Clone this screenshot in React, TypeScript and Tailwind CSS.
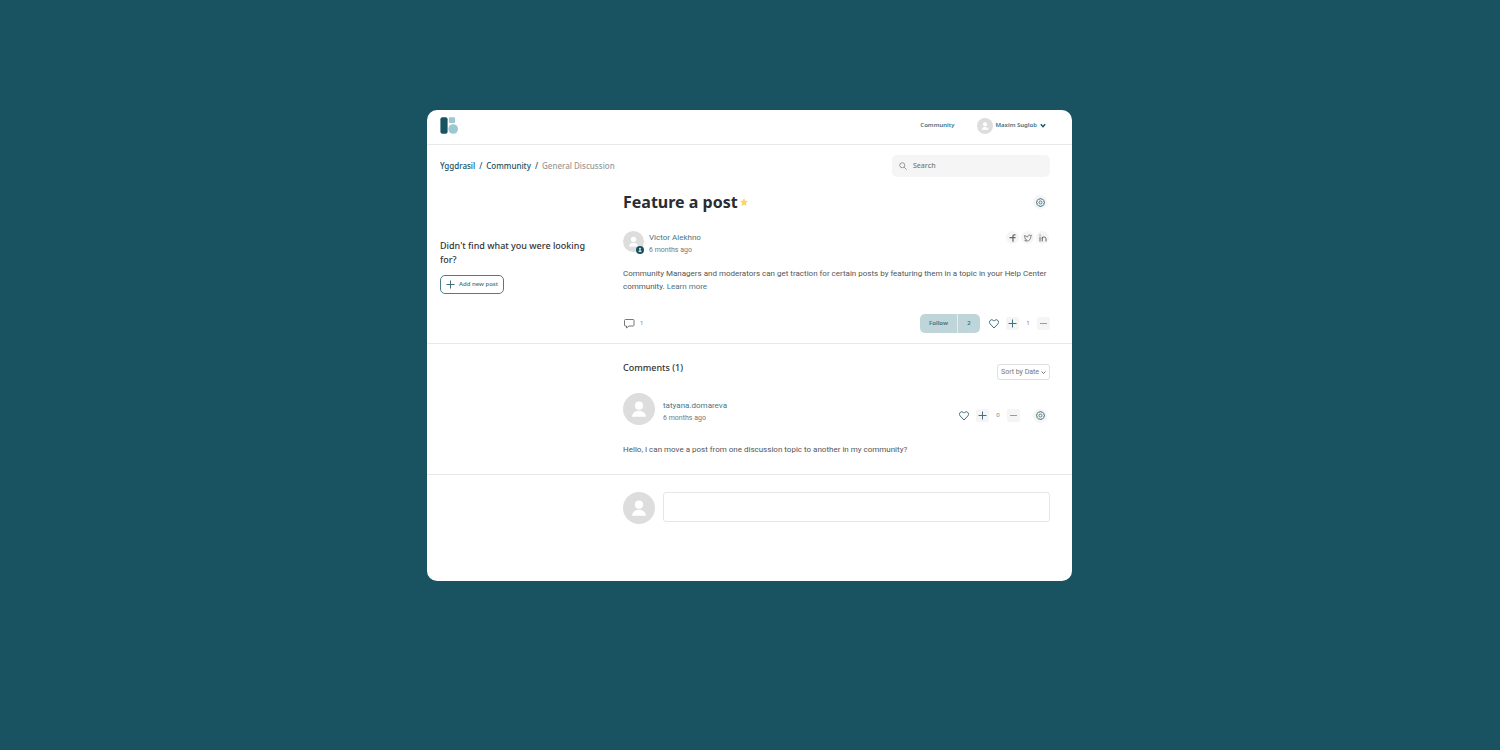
import { useState } from "react";

const HeartIcon = () => (
  <svg viewBox="0 0 20 20" className="w-[10px] h-[10px]" fill="none" stroke="currentColor" strokeWidth="2">
    <path d="M10 18 2.300 9.900A4.600 4.600 0 0 1 2.300 3 4.500 4.500 0 0 1 8.900 3L10 4.200l1.100-1.200a4.500 4.500 0 0 1 6.600 0 4.600 4.600 0 0 1 0 6.900Z" />
  </svg>
);

const PlusIcon = () => (
  <svg viewBox="0 0 9 9" className="w-[9px] h-[9px]" fill="none" stroke="currentColor">
    <path d="M4.500 0.500v8M0.500 4.500h8" />
  </svg>
);

const MinusIcon = () => (
  <svg viewBox="0 0 9 9" className="w-[9px] h-[9px]" fill="none" stroke="currentColor">
    <path d="M1 4.500h7" />
  </svg>
);

const GearIcon = () => (
  <svg viewBox="0 0 24 24" className="w-[9px] h-[9px]" fill="none" stroke="currentColor" strokeWidth="2.200" strokeLinejoin="round">
    <path d="M9.600 1.600h4.800l.8 2.800 2.600-1.400 3.300 3.300-1.400 2.600 2.800.8v4.800l-2.800.8 1.400 2.600-3.300 3.300-2.600-1.400-.8 2.800H9.600l-.8-2.800-2.600 1.400-3.300-3.300 1.400-2.600-2.800-.8V9.600l2.800-.8-1.400-2.600 3.300-3.300 2.600 1.400Z" />
    <circle cx="12" cy="12" r="4" />
  </svg>
);

const Avatar = ({ className }: { className: string }) => (
  <svg viewBox="0 0 32 32" className={`shrink-0 ${className}`}>
    <circle cx="16" cy="16" r="16" fill="#dddddd" />
    <circle cx="16" cy="12.700" r="4.100" fill="#fff" />
    <path d="M9 23.700c.4-3.700 3.200-5.900 7-5.900s6.600 2.200 7 5.900Z" fill="#fff" />
  </svg>
);

const GearButton = () => (
  <button
    aria-label="Settings"
    className="flex items-center justify-center w-[14px] h-[14px] mr-[3px] rounded-full bg-[#f5f5f5] text-[#3f707c] cursor-pointer"
  >
    <GearIcon />
  </button>
);

const Votes = ({ initial }: { initial: number }) => {
  const [votes, setVotes] = useState(initial);
  return (
    <div className="flex items-center text-[#3f707c]">
      <button aria-label="Like" className="mr-[7px] cursor-pointer">
        <HeartIcon />
      </button>
      <button
        aria-label="Vote up"
        className="flex items-center justify-center w-[13px] h-[13px] rounded-[2px] bg-[#f5f5f5] cursor-pointer"
        onClick={() => setVotes(votes + 1)}
      >
        <PlusIcon />
      </button>
      <span className="w-[18px] text-center text-[6px] text-[#777777]">{votes}</span>
      <button
        aria-label="Vote down"
        className="flex items-center justify-center w-[13px] h-[13px] rounded-[2px] bg-[#f5f5f5] text-[#86a3aa] cursor-pointer"
        onClick={() => setVotes(votes - 1)}
      >
        <MinusIcon />
      </button>
    </div>
  );
};

const socials = [
  {
    name: "Facebook",
    icon: (
      <svg viewBox="0 0 16 16" className="w-[8px] h-[8px]" fill="none" stroke="currentColor" strokeWidth="2.500">
        <path d="M13 1.800h-2.500C8.700 1.800 7.900 2.800 7.900 4.600V15.500M1 7h12" />
      </svg>
    ),
  },
  {
    name: "Twitter",
    icon: (
      <svg viewBox="0 0 16 16" className="w-[8px] h-[8px]" fill="none" stroke="currentColor" strokeWidth="1.600" strokeLinejoin="round">
        <path d="M1.500 2.500C3 4.600 5.200 5.600 7.800 5.600 7.500 3.400 9 2 10.700 2c1 0 1.700.4 2.200 1l2-.5-1.200 2.200c.2 5-3 9.300-7.700 9.300-1.800 0-3.400-.4-4.500-1.200 1.500 0 2.800-.4 3.700-1.100C2 10.500.8 6.500 1.500 2.500Z" />
      </svg>
    ),
  },
  {
    name: "LinkedIn",
    icon: (
      <svg viewBox="0 0 16 16" className="w-[8px] h-[8px]" fill="none" stroke="currentColor" strokeWidth="2">
        <path d="M2 5.500V15M2 1v2.200M6.500 15V5.500M6.500 9.500c0-2.200 1.400-3.500 3.600-3.500S14 7.300 14 9.500V15" />
      </svg>
    ),
  },
];

export default function App() {
  const [comment, setComment] = useState("");
  return (
    <div className="min-h-screen bg-[#195261] pl-4 pr-[17px] pt-[110px] pb-10 font-['Noto_Sans',sans-serif] text-[#333333]">
      <div className="w-full max-w-[645px] mx-auto rounded-[10px] bg-white pb-[57px]">
        <header className="flex items-center justify-between h-[35px] pl-[13px] pr-[26px] pb-[3px] border-b border-[#e6e8e9]">
          <a href="#" aria-label="Home">
            <svg viewBox="0 0 18 17" className="w-[18px] h-[17px]">
              <rect x="0.400" y="0.200" width="7.200" height="16.600" rx="2" fill="#195261" />
              <rect x="8.900" y="0.300" width="6.100" height="5.600" rx="1" fill="#9bc8d1" />
              <circle cx="13.200" cy="12" r="4.800" fill="#9bc8d1" />
            </svg>
          </a>
          <nav className="flex items-center gap-[23px] text-[6px] font-semibold text-[#3f707c]">
            <a href="#">Community</a>
            <button className="flex items-center cursor-pointer">
              <Avatar className="w-[16px] h-[16px] mr-[2px]" />
              Maxim Suglob
              <svg viewBox="0 0 6 6" className="w-[6px] h-[6px] ml-[3px] text-[#195261]" fill="none" stroke="currentColor" strokeWidth="1.400">
                <path d="M0.800 1.200 3 3.700l2.200-2.500" />
              </svg>
            </button>
          </nav>
        </header>

        <div className="flex items-center justify-between pt-[10px] pl-[13px] pr-[22px]">
          <nav aria-label="Breadcrumb" className="flex gap-[4px] text-[8px] font-medium text-[#195261]">
            <a href="#">Yggdrasil</a>
            <span>/</span>
            <a href="#">Community</a>
            <span>/</span>
            <span className="text-[#999999]">General Discussion</span>
          </nav>
          <label className="flex items-center w-[158px] h-[22px] pl-[7px] rounded-[5px] bg-[#f5f5f5]">
            <svg viewBox="0 0 16 16" className="w-[8px] h-[8px] shrink-0 text-[#888888]" fill="none" stroke="currentColor" strokeWidth="1.700">
              <circle cx="6.500" cy="6.500" r="5" />
              <path d="m10.200 10.200 5 5" />
            </svg>
            <input
              type="search"
              aria-label="Search"
              placeholder="Search"
              className="w-full ml-[6px] bg-transparent text-[7px] font-medium outline-none placeholder:text-[#777777]"
            />
          </label>
        </div>

        <section className="grid grid-cols-[183px_1fr] pl-[13px] pr-[22px] pb-[10px] border-b border-[#e6e8e9]">
          <aside className="pt-[62px] pr-[30px]">
            <h2 className="text-[9px] leading-[14px] font-medium">Didn't find what you were looking for?</h2>
            <button className="flex items-center gap-[4px] h-[19px] mt-[8px] px-[5px] rounded-[5px] border border-[#4a7f89] text-[6px] font-medium text-[#3f707c] whitespace-nowrap cursor-pointer">
              <PlusIcon />
              Add new post
            </button>
          </aside>
          <article>
            <div className="flex items-center justify-between h-[24px] mt-[13px]">
              <h1 className="flex items-center gap-[2px] text-[16px] leading-[24px] font-bold text-[#2a2d30]">
                Feature a post
                <svg viewBox="0 0 20 20" className="w-[8px] h-[8px]" fill="#f7d765">
                  <path d="m10 0 3 6.700 7 .8-5.200 4.900L16.200 20 10 16.100 3.800 20l1.400-7.600L0 7.500l7-.8Z" />
                </svg>
              </h1>
              <GearButton />
            </div>
            <div className="flex items-start justify-between mt-[17px]">
              <div className="flex items-start gap-[5px]">
                <div className="relative">
                  <Avatar className="w-[21px] h-[21px]" />
                  <svg viewBox="0 0 8 8" className="absolute w-[8px] h-[8px] right-0 -bottom-[2px]">
                    <circle cx="4" cy="4" r="4" fill="#195261" />
                    <circle cx="4" cy="2.800" r="1.100" fill="#cfe0e4" />
                    <path d="M2.500 6c0-1.300.6-2.100 1.500-2.100s1.500.8 1.500 2.100Z" fill="#cfe0e4" />
                  </svg>
                </div>
                <div className="pt-px font-['Roboto',sans-serif] leading-[12px]">
                  <a href="#" className="block text-[8px] text-[#4a7486]">Victor Alekhno</a>
                  <p className="text-[7px] text-[#777777]">6 months ago</p>
                </div>
              </div>
              <div className="flex gap-[2px] pr-px">
                {socials.map((el) => (
                  <a
                    href="#"
                    aria-label={el.name}
                    className="flex items-center justify-center w-[13px] h-[13px] rounded-full bg-[#f5f5f5] text-[#666666]"
                    key={el.name}
                  >
                    {el.icon}
                  </a>
                ))}
              </div>
            </div>
            <p className="mt-[11px] font-['Roboto',sans-serif] text-[8px] leading-[13px] text-[#555555]">
              Community Managers and moderators can get traction for certain posts by featuring them in a topic in your Help Center community.{" "}
              <a href="#" className="text-[#4a7486]">Learn more</a>
            </p>
            <div className="flex items-center justify-between mt-[21px]">
              <div className="flex items-center gap-[5px] text-[6px] text-[#777777]">
                <svg viewBox="0 0 12 11" className="w-[12px] h-[11px]" fill="none" stroke="currentColor">
                  <path d="M2.500 1.500h7.500a1 1 0 0 1 1 1v4.500a1 1 0 0 1-1 1H6L3.500 10V8h-1a1 1 0 0 1-1-1V2.500a1 1 0 0 1 1-1Z" />
                </svg>
                1
              </div>
              <div className="flex items-center gap-[9px]">
                <button className="flex items-center h-[19px] rounded-[5px] bg-[#bfd5da] text-[6px] font-semibold text-[#3f707c] cursor-pointer">
                  <span className="w-[38px] h-full leading-[19px] border-r border-[#e4eef0]">Follow</span>
                  <span className="w-[22px]">2</span>
                </button>
                <Votes initial={1} />
              </div>
            </div>
          </article>
        </section>

        <section className="pt-[18px] pl-[196px] pr-[22px] pb-[18px] border-b border-[#e6e8e9]">
          <div className="flex items-end justify-between h-[18px]">
            <h2 className="self-start text-[9px] leading-[12px] font-medium">Comments (1)</h2>
            <label className="relative flex items-center w-[53px] h-[16px] rounded-[3px] border border-[#e0e0e0] text-[#777777]">
              <select aria-label="Sort comments" className="w-full h-full pl-[3px] appearance-none bg-transparent font-['Roboto',sans-serif] text-[7px] cursor-pointer">
                <option>Sort by Date</option>
                <option>Sort by Votes</option>
              </select>
              <svg viewBox="0 0 5 5" className="absolute right-[3px] w-[5px] h-[5px] pointer-events-none" fill="none" stroke="currentColor">
                <path d="M0.500 1.500 2.500 3.500l2-2" />
              </svg>
            </label>
          </div>
          <div className="flex items-end justify-between mt-[13px]">
            <div className="flex gap-[8px]">
              <Avatar className="w-[32px] h-[32px]" />
              <div className="pt-[7px] font-['Roboto',sans-serif] leading-[12px]">
                <a href="#" className="block text-[8px] text-[#4a7486]">tatyana.domareva</a>
                <p className="text-[7px] text-[#777777]">6 months ago</p>
              </div>
            </div>
            <div className="flex items-center gap-[13px] h-[19px]">
              <Votes initial={0} />
              <GearButton />
            </div>
          </div>
          <p className="mt-[18px] font-['Roboto',sans-serif] text-[8px] leading-[13px] text-[#555555]">
            Hello, I can move a post from one discussion topic to another in my community?
          </p>
        </section>

        <form className="flex items-start gap-[8px] pt-[17px] pl-[196px] pr-[22px]">
          <Avatar className="w-[32px] h-[32px]" />
          <textarea
            aria-label="Add a comment"
            value={comment}
            onChange={(e) => setComment(e.target.value)}
            className="flex-1 h-[30px] p-[5px] rounded-[3px] border border-[#e6e6e6] text-[7px] resize-none outline-none"
          />
        </form>
      </div>
    </div>
  );
}
